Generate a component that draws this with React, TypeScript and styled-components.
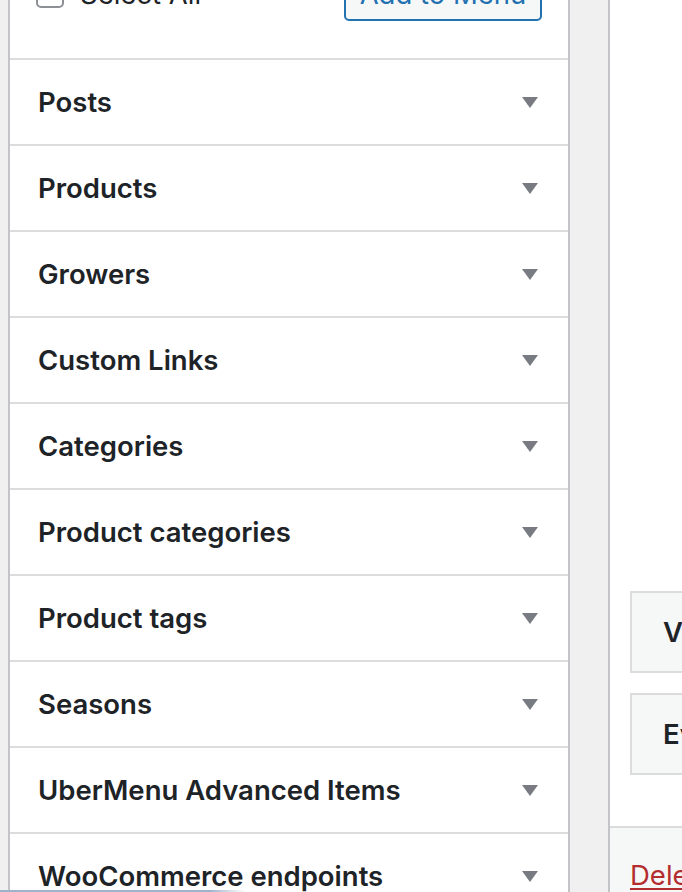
import React from "react";
import styled, {createGlobalStyle} from "styled-components";

const GlobalStyle = createGlobalStyle`
    html, body {
        margin: 0;
        padding: 0;
        background: #f0f0f1;
    }

    body {
        font-family: Inter, "Noto Sans", sans-serif;
        color: #1d2327;
    }
`;

const Viewport = styled.div`
    position: relative;
    width: 682px;
    height: 892px;
    overflow: hidden;
    background: #f0f0f1;
`;

const Columns = styled.div`
    display: flex;
    align-items: stretch;
    gap: 38px;
    margin-top: -60px;
    padding-left: 8px;
`;

const SidePanel = styled.div`
    flex: 0 0 562px;
    box-sizing: border-box;
    background: #fff;
    border-left: 2px solid #c3c4c7;
    border-right: 2px solid #c3c4c7;
`;

const ActionsBar = styled.div`
    box-sizing: border-box;
    height: 118px;
    padding: 27px 26px 0 26px;
    display: flex;
    align-items: flex-start;
    justify-content: space-between;
`;

const SelectAll = styled.label`
    display: flex;
    align-items: center;
    gap: 16px;
    height: 54px;
    font-size: 27.5px;
    color: #1d2327;
`;

const Checkbox = styled.span`
    width: 28px;
    height: 28px;
    box-sizing: border-box;
    border: 2px solid #8c8f94;
    border-radius: 5px;
    background: #fff;
`;

const AddButton = styled.button`
    width: 198px;
    height: 54px;
    box-sizing: border-box;
    border: 2px solid #2271b1;
    border-radius: 5px;
    background: #f6f7f7;
    color: #2271b1;
    font-family: inherit;
    font-size: 27.5px;
    padding: 0;
`;

const Section = styled.div`
    box-sizing: border-box;
    height: 86px;
    border-top: 2px solid #dcdcde;
    display: flex;
    align-items: center;
    justify-content: space-between;
    padding: 0 30px 0 28px;
`;

const SectionTitle = styled.h3`
    margin: 0;
    font-size: 27.5px;
    font-weight: 600;
    color: #1d2327;
`;

const Arrow = () => (
    <svg width="16" height="11" viewBox="0 0 16 11">
        <polygon points="0,0 16,0 8,11" fill="#787c82"/>
    </svg>
);

const MainPanel = styled.div`
    flex: 0 0 400px;
    display: flex;
    flex-direction: column;
    background: #fff;
    border-left: 2px solid #c3c4c7;
`;

const MenuBody = styled.div`
    flex: 1;
    display: flex;
    flex-direction: column;
    justify-content: flex-end;
    gap: 20px;
    padding: 0 0 51px 20px;
`;

const MenuItem = styled.div`
    box-sizing: border-box;
    height: 82px;
    display: flex;
    align-items: center;
    padding-left: 31px;
    background: #f6f7f7;
    border: 2px solid #dcdcde;
    border-right: none;
    font-size: 27.5px;
    font-weight: 600;
    color: #1d2327;
`;

const Footer = styled.div`
    box-sizing: border-box;
    height: 92px;
    padding: 30px 0 0 20px;
    background: #f6f7f7;
    border-top: 2px solid #dcdcde;
`;

const DeleteLink = styled.a`
    font-size: 27.5px;
    color: #b32d2e;
    text-decoration: underline;
    text-underline-offset: 3px;
`;

const ScrollHint = styled.div`
    position: absolute;
    left: 0;
    bottom: 0;
    width: 246px;
    height: 2px;
    background: linear-gradient(90deg, #9fb3cc 85%, rgba(159, 179, 204, 0));
`;

const sections = [
    "Posts",
    "Products",
    "Growers",
    "Custom Links",
    "Categories",
    "Product categories",
    "Product tags",
    "Seasons",
    "UberMenu Advanced Items",
    "WooCommerce endpoints",
];

export default function App() {
    return (
        <Viewport>
            <GlobalStyle/>
            <Columns>
                <SidePanel>
                    <ActionsBar>
                        <SelectAll>
                            <Checkbox/>
                            Select All
                        </SelectAll>
                        <AddButton>Add to Menu</AddButton>
                    </ActionsBar>
                    {sections.map((name) => (
                        <Section key={name}>
                            <SectionTitle>{name}</SectionTitle>
                            <Arrow/>
                        </Section>
                    ))}
                </SidePanel>
                <MainPanel>
                    <MenuBody>
                        <MenuItem>Visit</MenuItem>
                        <MenuItem>Events</MenuItem>
                    </MenuBody>
                    <Footer>
                        <DeleteLink href="#">Delete Menu</DeleteLink>
                    </Footer>
                </MainPanel>
            </Columns>
            <ScrollHint/>
        </Viewport>
    );
}
